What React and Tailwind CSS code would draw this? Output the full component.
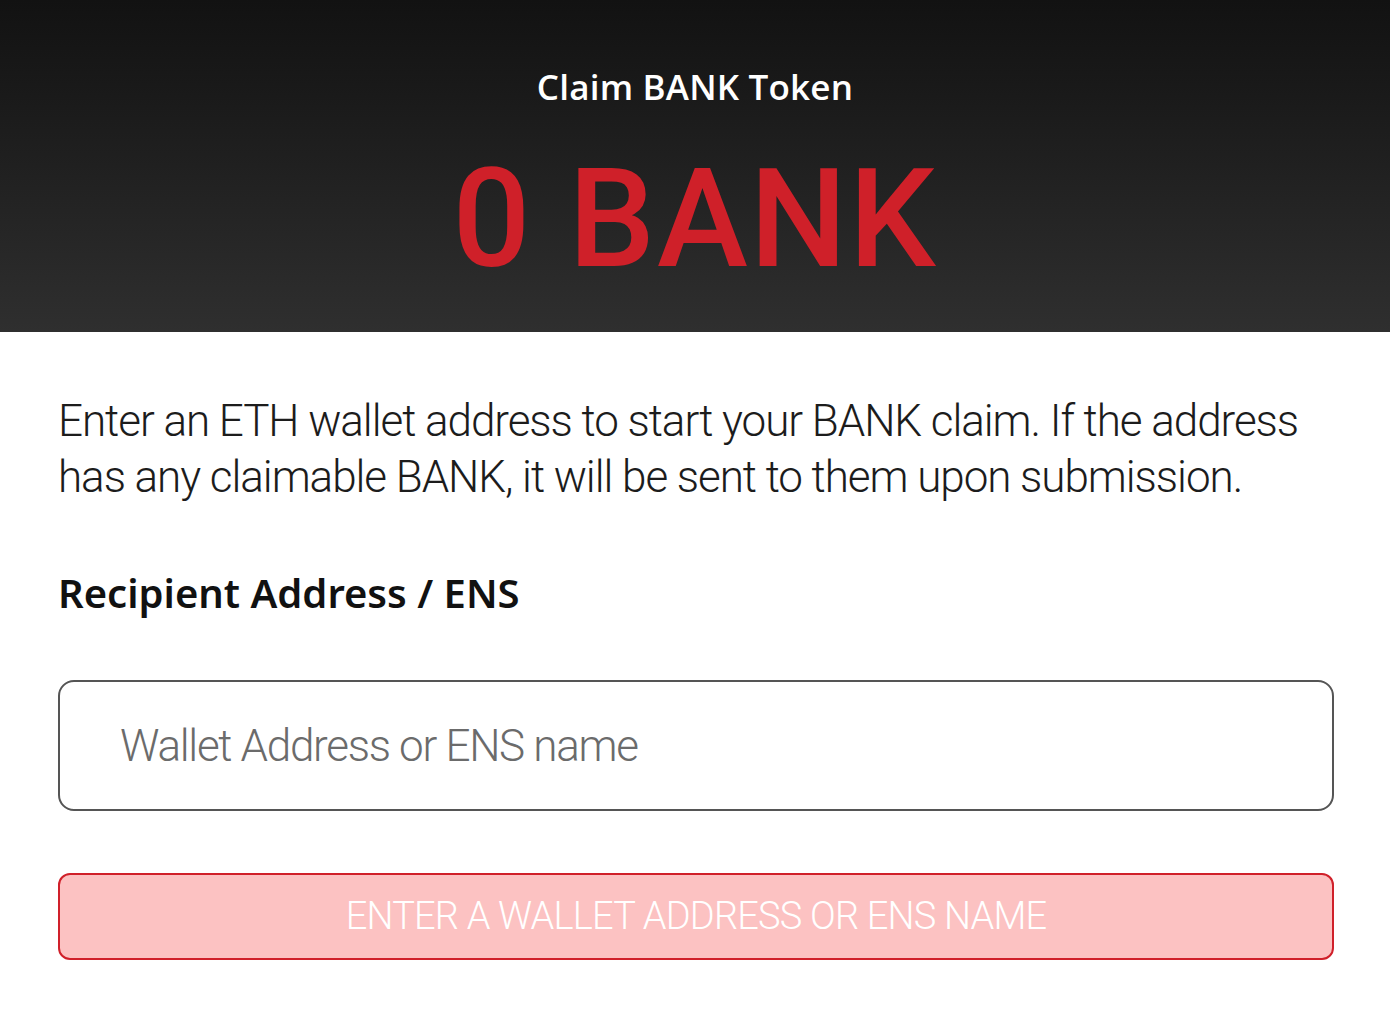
export default function App() {
  return (
    <div className="w-[1390px] h-[1018px] bg-white overflow-hidden">
      <div className="h-[332px] bg-gradient-to-b from-[#121212] to-[#2f2f2f] flex flex-col items-center">
        <h1 className="mt-[64px] text-white text-[35px] font-semibold leading-[46px] tracking-[0.2px] font-['Open_Sans',sans-serif]">
          Claim BANK Token
        </h1>
        <div className="mt-[39px] text-[#cf2029] text-[137px] font-medium leading-[140px] tracking-[2px] font-['Roboto',sans-serif]">
          0 BANK
        </div>
      </div>
      <div className="pl-[58px] pr-[56px] pt-[61px]">
        <p className="text-[44px] leading-[56px] font-light text-[#1c1c1c] tracking-[-1.05px] font-['Roboto',sans-serif]">
          Enter an ETH wallet address to start your BANK claim. If the address has any claimable BANK, it will be sent to them upon submission.
        </p>
        <h2 className="mt-[60px] text-[40px] leading-[56px] font-semibold text-[#111] font-['Noto_Sans',sans-serif]">
          Recipient Address / ENS
        </h2>
        <div className="mt-[59px] h-[131px] border-2 border-[#555] rounded-[16px] flex items-center pl-[60px]">
          <span className="text-[44px] font-light text-[#6b6b6b] tracking-[-1.3px] font-['Roboto',sans-serif]">Wallet Address or ENS name</span>
        </div>
        <button className="mt-[62px] w-full h-[87px] bg-[#fcc2c2] border-2 border-[#d0202a] rounded-[12px] flex items-center justify-center">
          <span className="text-[38px] font-light text-white uppercase tracking-[-0.8px] font-['Roboto',sans-serif]">Enter a wallet address or ENS name</span>
        </button>
      </div>
    </div>
  );
}
